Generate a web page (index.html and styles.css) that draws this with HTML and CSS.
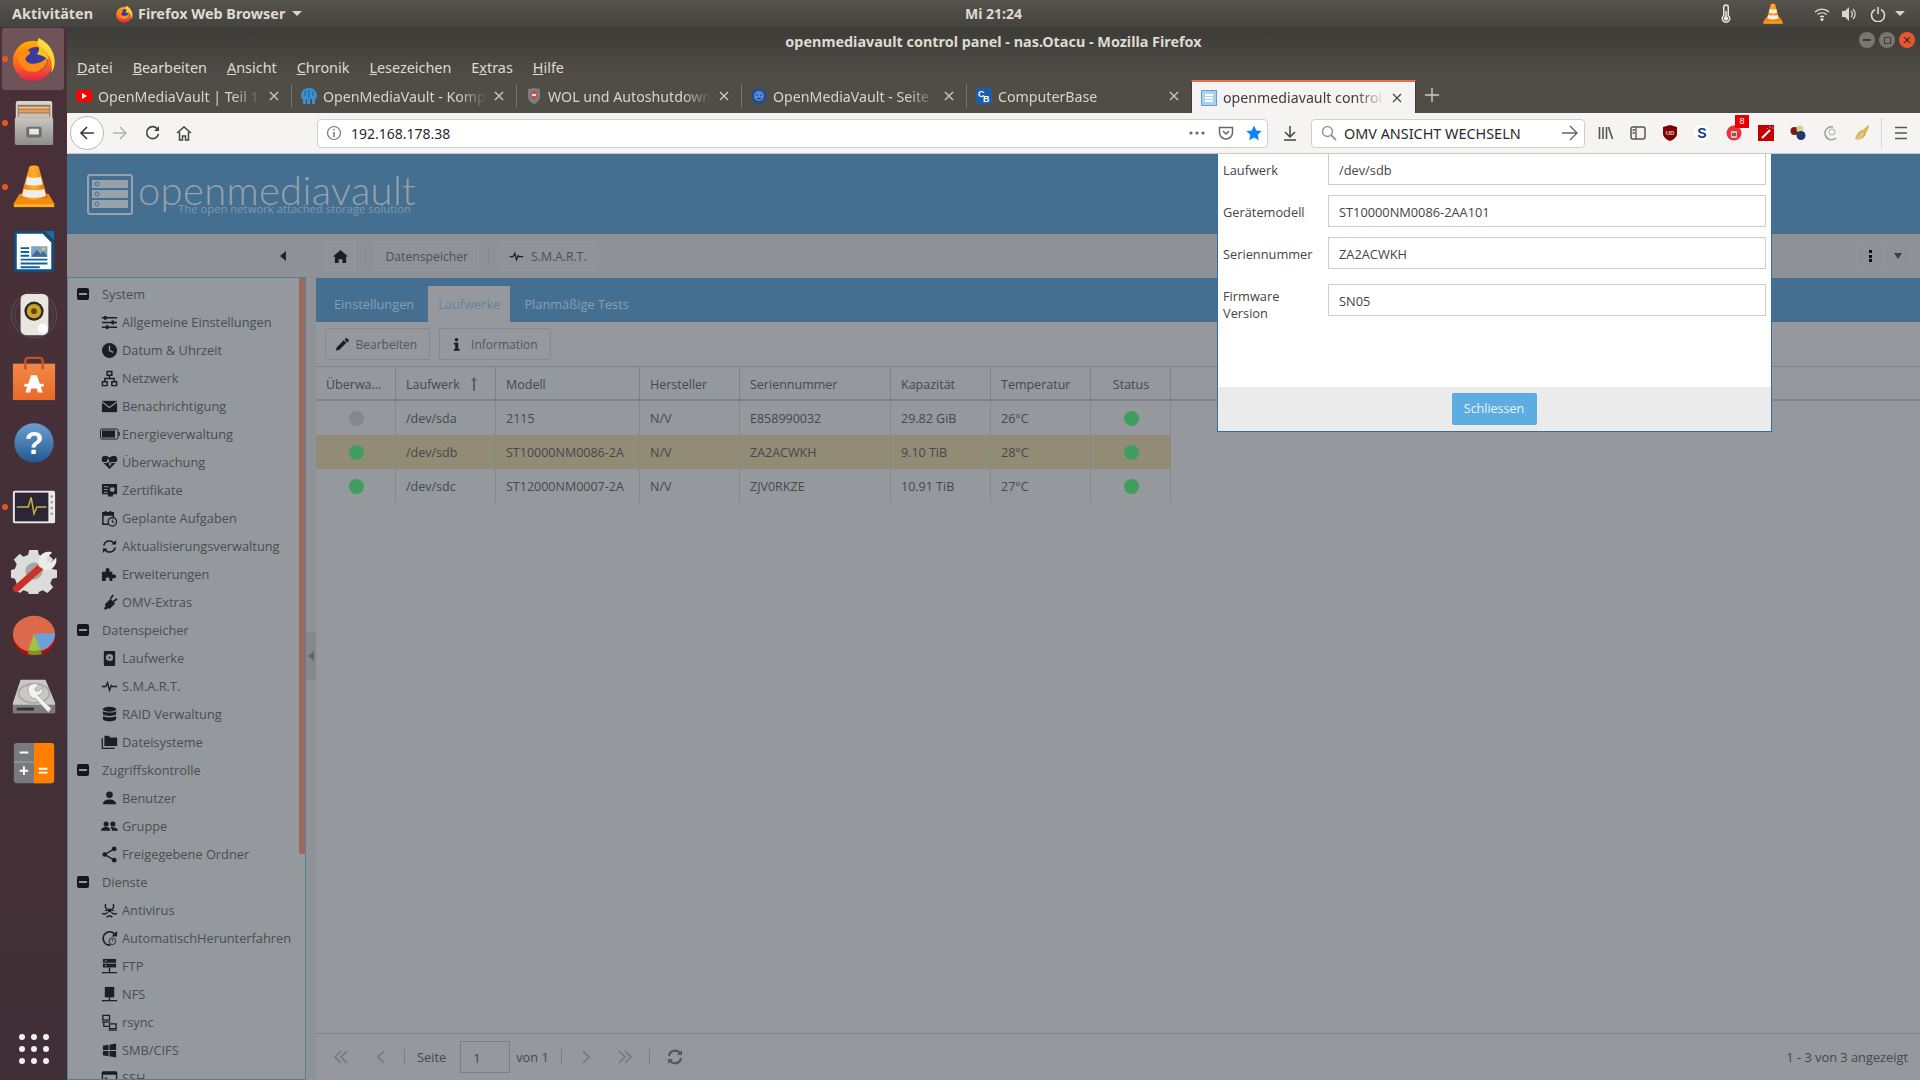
FILE: index.html
```html
<!DOCTYPE html>
<html lang="de">
<head>
<meta charset="utf-8">
<title>openmediavault control panel</title>
<link rel="stylesheet" href="styles.css">
</head>
<body>
<svg class="defs" xmlns="http://www.w3.org/2000/svg">
<defs>
<linearGradient id="g-fx" x1="0" y1="0" x2="0" y2="1"><stop offset="0" stop-color="#ffb000"/><stop offset=".55" stop-color="#ff6a1a"/><stop offset="1" stop-color="#e5224f"/></linearGradient>
<linearGradient id="g-cone" x1="0" y1="0" x2="1" y2="0"><stop offset="0" stop-color="#f27a0a"/><stop offset=".5" stop-color="#ffae2c"/><stop offset="1" stop-color="#e56a00"/></linearGradient>
<linearGradient id="g-help" x1="0" y1="0" x2="0" y2="1"><stop offset="0" stop-color="#6aa0d2"/><stop offset="1" stop-color="#22588f"/></linearGradient>
<linearGradient id="g-bag" x1="0" y1="0" x2="0" y2="1"><stop offset="0" stop-color="#f08a46"/><stop offset="1" stop-color="#e9692a"/></linearGradient>
<linearGradient id="g-cab" x1="0" y1="0" x2="0" y2="1"><stop offset="0" stop-color="#c9c7c2"/><stop offset="1" stop-color="#8f8d89"/></linearGradient>

<symbol id="i-firefox" viewBox="0 0 48 48">
<circle cx="24" cy="26" r="21" fill="url(#g-fx)"/>
<path d="M30 2C26 9 31 13 37 17c6 5 8 12 6 21 5-6 4-14 2-20C42 10 36 5 30 2z" fill="#ffd83a"/>
<circle cx="27" cy="24" r="12.500" fill="#3c3a9e"/>
<path d="M8 18c4-4 7-4 11-3 3 1 2 4 0 5-2 2-4 3-2 6 2 3 8 4 13 2 4-2 7-3 9-7 1 7-3 14-12 16C18 39 8 33 8 18z" fill="#ff8a14"/>
<path d="M30 10c5 3 10 8 10 15-4-4-8-5-12-6 2-2 3-5 2-9z" fill="#ffc21c"/>
</symbol>

<symbol id="i-cab" viewBox="0 0 48 48">
<rect x="5" y="1" width="38" height="20" rx="2" fill="#d6d4cf"/>
<rect x="7" y="5" width="34" height="14" fill="#8a7a60"/>
<rect x="8" y="7" width="32" height="2" fill="#f5c08a"/>
<rect x="8" y="10" width="32" height="3" fill="#ee9a58"/>
<rect x="8" y="14" width="32" height="4" fill="#c9c2b4"/>
<rect x="4" y="18" width="40" height="29" rx="2" fill="url(#g-cab)"/>
<rect x="16" y="28" width="16" height="11" rx="2" fill="#6f6e6a"/>
<rect x="19" y="30" width="10" height="6" fill="#e8e7e3"/>
</symbol>

<symbol id="i-vlc" viewBox="0 0 48 48">
<path d="M3 41l6-10h30l6 10v3H3z" fill="#f28a0d"/>
<path d="M19 3c1-2 9-2 10 0l9 32c-3 3-25 3-28 0z" fill="url(#g-cone)"/>
<path d="M17 13c4 2 10 2 14 0l2 8c-5 2-13 2-18 0zM13.500 26c6 2 15 2 21 0l2 7c-6 3-19 3-25 0z" fill="#eee"/>
<rect x="3" y="42" width="42" height="3" fill="#ffb01e"/>
</symbol>

<symbol id="i-writer" viewBox="0 0 48 48">
<path d="M3 3h31l11 11v30a2 2 0 0 1-2 2H5a2 2 0 0 1-2-2z" fill="#0e4f7e"/>
<path d="M6 6h27l9 9v28H6z" fill="#fff"/>
<path d="M35 3h10v10z" fill="#1a6ea8"/>
<path d="M10 20h9v2h-9zM10 24h9v2h-9zM10 28h9v2h-9zM10 32h28v2H10zM10 36h28v2H10zM10 40h20v2H10z" fill="#136295"/>
<rect x="21" y="19" width="17" height="11" fill="#7fa6c6"/>
<path d="M21 30l6-7 4 4 3-3 4 6z" fill="#3d6b8f"/>
<circle cx="34" cy="22" r="2" fill="#e8c24a"/>
</symbol>

<symbol id="i-spk" viewBox="0 0 48 48">
<circle cx="24" cy="24" r="23.500" fill="none" stroke="#6d6d78" stroke-opacity=".55"/>
<circle cx="24" cy="24" r="20" fill="none" stroke="#6d6d78" stroke-opacity=".4"/>
<rect x="10" y="2" width="29" height="43" rx="6" fill="#e8e6df"/>
<circle cx="24" cy="20" r="10" fill="#2c2a26"/>
<circle cx="24" cy="20" r="7.500" fill="#c9a227"/>
<circle cx="24" cy="20" r="3" fill="#5b4810"/>
<circle cx="33" cy="38" r="5" fill="#fff"/>
</symbol>

<symbol id="i-bag" viewBox="0 0 48 48">
<rect x="2" y="8" width="44" height="38" fill="url(#g-bag)"/>
<path d="M15 14V5a3 3 0 0 1 3-3h12a3 3 0 0 1 3 3v9" fill="none" stroke="#c9501e" stroke-width="2.500"/>
<path d="M21 20h6l6 18h-5l-1-4h-6l-1 4h-5z" fill="#fff"/>
<rect x="14" y="29" width="20" height="3" fill="#fff"/>
</symbol>

<symbol id="i-help" viewBox="0 0 48 48">
<circle cx="24" cy="24" r="20.500" fill="url(#g-help)"/>
<text x="24" y="35" text-anchor="middle" class="qmark">?</text>
</symbol>

<symbol id="i-mon" viewBox="0 0 48 48">
<rect x="2" y="7" width="44" height="34" rx="2" fill="#e9e9e7"/>
<rect x="4" y="9" width="35" height="30" fill="#2b2637"/>
<path d="M6 24h12l3-10 3 17 3-7h10" fill="none" stroke="#d1b33c" stroke-width="1.500"/>
<g fill="#9a9a98"><circle cx="42.500" cy="13" r="1.300"/><circle cx="42.500" cy="19" r="1.300"/><circle cx="42.500" cy="25" r="1.300"/><circle cx="42.500" cy="31" r="1.300"/></g>
</symbol>

<symbol id="i-tools" viewBox="0 0 48 48">
<path d="M19 2h9l1 5 5 2 4-3 6 6-3 5 2 5 5 1v8l-5 1-2 5 3 4-6 6-5-3-4 2-1 5h-9l-1-5-5-2-4 3-6-6 3-4-2-5-4-1v-8l4-1 2-5-3-5 6-6 4 3 5-2z" fill="#dcdcd8"/>
<circle cx="24" cy="24" r="9" fill="#a5a5a6"/>
<path d="M3 40L30 16l5 5L8 45a3 3 0 0 1-5-5z" fill="#cf2f2b"/>
<path d="M29 19c-2-7 2-14 9-15 2 0 4 0 5 1l-6 5 1 4 4 1 5-5c2 7-4 14-12 13z" fill="#ececE8"/>
</symbol>

<symbol id="i-pie" viewBox="0 0 48 48">
<ellipse cx="24" cy="27" rx="22" ry="19" fill="#a11414"/>
<ellipse cx="24" cy="23" rx="22" ry="19" fill="#dc6a4a"/>
<path d="M24 23l22-1c0 9-7 16-15 18z" fill="#6ba0d8"/>
<path d="M24 23l7 17c-5 1-9 1-13 0z" fill="#a5c040"/>
<path d="M18 40c4 1 8 1 13 0l1 4c-5 1-10 1-14 0z" fill="#6f9a2c"/>
</symbol>

<symbol id="i-disk" viewBox="0 0 48 48">
<path d="M10 4h26l10 24v10H2V28z" fill="#c9c8c4"/>
<ellipse cx="24" cy="18" rx="16" ry="10" fill="none" stroke="#a5a4a0" stroke-width="1.500"/>
<rect x="2" y="30" width="44" height="9" fill="#7d7c78"/>
<rect x="6" y="33" width="18" height="3" fill="#333"/>
<path d="M18 12c2-5 9-5 11-2l-4 3 1 3 4-1 3-3c1 3-1 8-5 8l14 14-3 4-14-15c-4 1-8-4-7-11z" fill="#f2f2ef" stroke="#8a8985" stroke-width=".6"/>
</symbol>

<symbol id="i-calc" viewBox="0 0 48 48">
<rect x="3" y="3" width="42" height="42" rx="3" fill="#777a7e"/>
<path d="M24 3h18a3 3 0 0 1 3 3v36a3 3 0 0 1-3 3H24z" fill="#ff7f00"/>
<path d="M3 23h21" stroke="#a8a9ab"/>
<path d="M9 13h9M9 32h9M13.500 27.500v9M29 30h9M29 34h9" stroke="#fff" stroke-width="2" fill="none"/>
</symbol>

<symbol id="i-thermo" viewBox="0 0 16 24"><path d="M5 3a3 3 0 0 1 6 0v11a5 5 0 1 1-6 0z" fill="none" stroke="#e8e6e1" stroke-width="2"/><circle cx="8" cy="18" r="3" fill="#e8e6e1"/><rect x="7" y="8" width="2" height="9" fill="#e8e6e1"/></symbol>

<symbol id="n-sliders" viewBox="0 0 18 18"><path d="M1 4h16M1 9h16M1 14h16" stroke="currentColor" stroke-width="1.400"/><rect x="3" y="2" width="3" height="4" rx="1" fill="currentColor"/><rect x="11" y="7" width="3" height="4" rx="1" fill="currentColor"/><rect x="5" y="12" width="3" height="4" rx="1" fill="currentColor"/></symbol>
<symbol id="n-clock" viewBox="0 0 18 18"><circle cx="9" cy="9" r="8" fill="currentColor"/><path d="M9 4v5l4 2" fill="none" stroke="#95989c" stroke-width="1.400"/></symbol>
<symbol id="n-net" viewBox="0 0 18 18"><path d="M6.500 1.500h5v4h-5zM1.500 12.500h5v4h-5zM11.500 12.500h5v4h-5zM9 5.500V9M4 12.500V9h10v3.500" fill="none" stroke="currentColor" stroke-width="1.500"/></symbol>
<symbol id="n-mail" viewBox="0 0 18 18"><path d="M1 3h16v12H1z" fill="currentColor"/><path d="M1 4l8 6 8-6" fill="none" stroke="#95989c" stroke-width="1.200"/></symbol>
<symbol id="n-batt" viewBox="0 0 20 12"><rect x=".5" y="1" width="17.500" height="10" rx="1.500" fill="none" stroke="currentColor"/><rect x="2" y="2.500" width="13" height="7" fill="currentColor"/><rect x="18.500" y="4" width="1.200" height="4" fill="currentColor"/></symbol>
<symbol id="n-heart" viewBox="0 0 18 18"><path d="M9 16L2 9C-1 5 2 1 5 2c2 0 3 1 4 2 1-1 2-2 4-2 3-1 6 3 3 7z" fill="currentColor"/><path d="M1 9h5l1.500-3 2 6L11 9h6" fill="none" stroke="#95989c" stroke-width="1.100"/></symbol>
<symbol id="n-cert" viewBox="0 0 18 18"><path d="M1 2h16v11h-4l-1 3-2-1-2 1-1-3H1z" fill="currentColor"/><path d="M3 5h5M3 8h4M3 11h4" stroke="#95989c"/><circle cx="12" cy="8" r="2.500" fill="#95989c"/></symbol>
<symbol id="n-cal" viewBox="0 0 18 18"><path d="M2 3h11v7H9l-1 5H2z" fill="none" stroke="currentColor" stroke-width="1.600"/><path d="M2 3h11v3H2zM4 1h2v3H4zM9 1h2v3H9z" fill="currentColor"/><circle cx="12" cy="12.500" r="4.500" fill="#95989c" stroke="currentColor" stroke-width="1.300"/><path d="M12 10v3h2" fill="none" stroke="currentColor"/></symbol>
<symbol id="n-sync" viewBox="0 0 18 18"><path d="M3 8a6 6 0 0 1 11-2M15 10a6 6 0 0 1-11 2" fill="none" stroke="currentColor" stroke-width="1.700"/><path d="M16 2v5h-5zM2 16v-5h5z" fill="currentColor"/></symbol>
<symbol id="n-puzzle" viewBox="0 0 18 18"><path d="M1 6h4V4a2 2 0 0 1 4 0v2h3v3h2a2 2 0 0 1 0 4h-2v3H9v-2a2 2 0 0 0-4 0v2H1z" fill="currentColor"/></symbol>
<symbol id="n-plug" viewBox="0 0 18 18"><path d="M3 15l2-2-1-2 6-6 5 5-6 6-2-1-2 2z" fill="currentColor"/><path d="M10 5l3-4M13 8l4-3" stroke="currentColor" stroke-width="1.800"/></symbol>
<symbol id="n-hdd" viewBox="0 0 18 18"><rect x="3" y="1" width="12" height="16" rx="1" fill="currentColor"/><circle cx="9" cy="8" r="3.800" fill="#95989c"/><circle cx="9" cy="8" r="1.100" fill="currentColor"/><path d="M6 14l2-3" stroke="currentColor"/></symbol>
<symbol id="n-pulse" viewBox="0 0 18 18"><path d="M1 9h4l2-4 2 8 2-5 1 1h5" fill="none" stroke="currentColor" stroke-width="1.500"/></symbol>
<symbol id="n-db" viewBox="0 0 18 18"><ellipse cx="9" cy="3.500" rx="7" ry="2.700" fill="currentColor"/><path d="M2 5.500c2 2 12 2 14 0V9c-2 2-12 2-14 0zM2 10.500c2 2 12 2 14 0V14c-2 3-12 3-14 0z" fill="currentColor"/></symbol>
<symbol id="n-folder" viewBox="0 0 20 18"><path d="M4 1h5l2 2h8v10H4z" fill="currentColor"/><path d="M1.500 4v12H16" fill="none" stroke="currentColor" stroke-width="1.500"/></symbol>
<symbol id="n-user" viewBox="0 0 18 18"><circle cx="9" cy="5" r="3.500" fill="currentColor"/><path d="M2 15c0-3 3-5 7-5s7 2 7 5z" fill="currentColor"/></symbol>
<symbol id="n-group" viewBox="0 0 20 18"><circle cx="6" cy="6" r="3" fill="currentColor"/><circle cx="14" cy="6" r="3" fill="currentColor"/><path d="M0 14c0-3 3-4.500 6-4.500S11 11 11 14zM11 9.500c4 0 9 1 9 4.500h-7c0-2-1-3-2-4.500z" fill="currentColor"/></symbol>
<symbol id="n-share" viewBox="0 0 18 18"><path d="M14 3L4 9l10 6" fill="none" stroke="currentColor" stroke-width="1.500"/><circle cx="14" cy="3" r="2.500" fill="currentColor"/><circle cx="4" cy="9" r="2.500" fill="currentColor"/><circle cx="14" cy="15" r="2.500" fill="currentColor"/></symbol>
<symbol id="n-bio" viewBox="0 0 18 18"><circle cx="9" cy="9" r="2" fill="currentColor"/><path d="M5 2a5 5 0 0 0 2 6M13 2a5 5 0 0 1-2 6M1 12a5 5 0 0 0 6-1M17 12a5 5 0 0 1-6-1M6 16a5 5 0 0 1 6 0" fill="none" stroke="currentColor" stroke-width="1.500"/><path d="M4 9h10" stroke="currentColor"/></symbol>
<symbol id="n-auto" viewBox="0 0 18 18"><path d="M15 5A7 7 0 1 0 10 16" fill="none" stroke="currentColor" stroke-width="1.800"/><path d="M17 1v6h-6z" fill="currentColor"/><circle cx="12" cy="12" r="3.500" fill="none" stroke="currentColor" stroke-width=".9"/><path d="M12 10v2" stroke="currentColor"/></symbol>
<symbol id="n-ftp" viewBox="0 0 18 18"><rect x="2" y="1" width="14" height="4" fill="currentColor"/><rect x="2" y="6" width="14" height="4" fill="currentColor"/><path d="M9 10v5M1 15.500h16" stroke="currentColor" stroke-width="1.500"/><path d="M4 3h2M4 8h2" stroke="#95989c"/></symbol>
<symbol id="n-nfs" viewBox="0 0 18 18"><rect x="4" y="1" width="10" height="11" fill="currentColor"/><path d="M9 12v3M1 15.500h16" stroke="currentColor" stroke-width="1.500"/></symbol>
<symbol id="n-rsync" viewBox="0 0 18 18"><path d="M2 1.500h7v5H2zM9 10.500h7v5H9z" fill="none" stroke="currentColor" stroke-width="1.400"/><path d="M1 8.500h9M8 17h9M3 9v4h5" fill="none" stroke="currentColor" stroke-width="1.300"/></symbol>
<symbol id="n-win" viewBox="0 0 18 18"><path d="M2 4l6-1v5.500H2zM9 2.800l7-1.300v7H9zM2 9.500h6V15l-6-1zM9 9.500h7v7l-7-1.300z" fill="currentColor"/></symbol>
<symbol id="n-term" viewBox="0 0 18 18"><rect x="1.500" y="2" width="15" height="14" rx="1" fill="none" stroke="currentColor" stroke-width="1.500"/><rect x="1.500" y="2" width="15" height="3" fill="currentColor"/><path d="M4 8l3 2-3 2" fill="none" stroke="currentColor" stroke-width="1.200"/></symbol>
</defs>
</svg>

<div class="desktop">
<header class="topbar">
  <span class="activities">Aktivitäten</span>
  <span class="appmenu"><svg class="ti-fox"><use href="#i-firefox"/></svg>Firefox Web Browser<i class="caret"></i></span>
  <span class="clock">Mi 21:24</span>
  <div class="tray">
    <svg class="tray-thermo"><use href="#i-thermo"/></svg>
    <svg class="tray-vlc"><use href="#i-vlc"/></svg>
    <svg class="tray-wifi" viewBox="0 0 16 16"><path d="M1 6a10 10 0 0 1 14 0M3.500 8.500a7 7 0 0 1 9 0M6 11a3.500 3.500 0 0 1 4 0" fill="none" stroke="#e0ded9" stroke-width="1.400"/><circle cx="8" cy="13.500" r="1.500" fill="#e0ded9"/></svg>
    <svg class="tray-vol" viewBox="0 0 16 16"><path d="M1 5h3l4-4v14l-4-4H1z" fill="#d8d6d1"/><path d="M10 5a4 4 0 0 1 0 6M12 3a7 7 0 0 1 0 10" fill="none" stroke="#d8d6d1" stroke-width="1.300"/></svg>
    <svg class="tray-pow" viewBox="0 0 16 16"><path d="M5 3.500a6.500 6.500 0 1 0 6 0M8 1v7" fill="none" stroke="#e0ded9" stroke-width="1.500"/></svg>
    <i class="caret"></i>
  </div>
</header>
<div class="below">
<aside class="dock">
  <div class="dock-item dock-active"><i class="run"></i><svg class="dk"><use href="#i-firefox"/></svg></div>
  <div class="dock-item"><i class="run"></i><svg class="dk"><use href="#i-cab"/></svg></div>
  <div class="dock-item"><i class="run"></i><svg class="dk"><use href="#i-vlc"/></svg></div>
  <div class="dock-item"><svg class="dk"><use href="#i-writer"/></svg></div>
  <div class="dock-item"><svg class="dk"><use href="#i-spk"/></svg></div>
  <div class="dock-item"><svg class="dk"><use href="#i-bag"/></svg></div>
  <div class="dock-item"><svg class="dk"><use href="#i-help"/></svg></div>
  <div class="dock-item"><i class="run"></i><svg class="dk"><use href="#i-mon"/></svg></div>
  <div class="dock-item"><svg class="dk"><use href="#i-tools"/></svg></div>
  <div class="dock-item"><svg class="dk"><use href="#i-pie"/></svg></div>
  <div class="dock-item"><svg class="dk"><use href="#i-disk"/></svg></div>
  <div class="dock-item"><svg class="dk"><use href="#i-calc"/></svg></div>
  <div class="dots"><i></i><i></i><i></i><i></i><i></i><i></i><i></i><i></i><i></i></div>
</aside>
<main class="window">
  <div class="titlebar">
    <span class="wintitle">openmediavault control panel - nas.Otacu - Mozilla Firefox</span>
    <div class="winbtns">
      <span class="wb"><i class="wb-min"></i></span><span class="wb"><i class="wb-max"></i></span><span class="wb wb-close">×</span>
    </div>
  </div>
  <nav class="menubar">
    <span><u>D</u>atei</span><span><u>B</u>earbeiten</span><span><u>A</u>nsicht</span><span><u>C</u>hronik</span><span><u>L</u>esezeichen</span><span>E<u>x</u>tras</span><span><u>H</u>ilfe</span>
  </nav>
  <div class="tabbar">
    <div class="tab"><svg class="fav" viewBox="0 0 16 16"><rect y="2" width="16" height="12" rx="3" fill="#f00"/><path d="M6 5l5 3-5 3z" fill="#fff"/></svg><span class="tab-t">OpenMediaVault | Teil 1 - Die Einrichtung</span><svg class="tab-x" viewBox="0 0 10 10"><path d="M1 1l8 8M9 1l-8 8"/></svg></div>
    <div class="tab"><svg class="fav" viewBox="0 0 16 16"><path d="M0 8c0-5 3-8 8-8s8 3 8 8c0 2-1 3-2 3v5h-3v-5H9v5H6v-5H5v5H2v-5C1 11 0 10 0 8z" fill="#3b8fd0"/><path d="M8 2v8M4 3v5M12 3v5" stroke="#1d5f96"/></svg><span class="tab-t">OpenMediaVault - Komplettanleitung</span><svg class="tab-x" viewBox="0 0 10 10"><path d="M1 1l8 8M9 1l-8 8"/></svg></div>
    <div class="tab"><svg class="fav" viewBox="0 0 16 16"><path d="M2 1l6-1 6 1v8c0 3-3 6-6 7-3-1-6-4-6-7z" fill="#75808a"/><path d="M5 3h6v5c0 2-1 3-3 4-2-1-3-2-3-4z" fill="#c9503a"/><rect x="6" y="6" width="4" height="2" fill="#dfe3e6"/></svg><span class="tab-t">WOL und Autoshutdown für OMV</span><svg class="tab-x" viewBox="0 0 10 10"><path d="M1 1l8 8M9 1l-8 8"/></svg></div>
    <div class="tab"><svg class="fav" viewBox="0 0 16 16"><circle cx="8" cy="8" r="7.800" fill="#1f4c9a"/><circle cx="8" cy="8" r="5" fill="#5e89c7"/><path d="M5 7h2M9 7h2M6 10c1 1 3 1 4 0" stroke="#143a7a"/></svg><span class="tab-t">OpenMediaVault - Seite 1 von 5</span><svg class="tab-x" viewBox="0 0 10 10"><path d="M1 1l8 8M9 1l-8 8"/></svg></div>
    <div class="tab"><svg class="fav" viewBox="0 0 16 16"><rect width="16" height="16" rx="2" fill="#1f5ca8"/><text x="2" y="9" class="cb">C</text><text x="7" y="14" class="cb">B</text></svg><span class="tab-t">ComputerBase</span><svg class="tab-x" viewBox="0 0 10 10"><path d="M1 1l8 8M9 1l-8 8"/></svg></div>
    <div class="tab tab-active"><svg class="fav" viewBox="0 0 16 16"><rect x=".5" y=".5" width="15" height="15" fill="#a9d3ef" stroke="#5aa2d6"/><path d="M4 4h8v2H4zM4 7h8v2H4zM4 10h8v2H4z" fill="#fff"/></svg><span class="tab-t">openmediavault control panel</span><svg class="tab-x" viewBox="0 0 10 10"><path d="M1 1l8 8M9 1l-8 8"/></svg></div>
    <svg class="newtab" viewBox="0 0 14 14"><path d="M7 0v14M0 7h14"/></svg>
  </div>
  <div class="navbar">
    <span class="backbtn"><svg class="nb" viewBox="0 0 16 16"><path d="M15 8H2M8 2L2 8l6 6" fill="none" stroke="#3a3a3a" stroke-width="1.600"/></svg></span>
    <svg class="nb fwd" viewBox="0 0 16 16"><path d="M1 8h13M8 2l6 6-6 6" fill="none" stroke="#b3b3b1" stroke-width="1.600"/></svg>
    <svg class="nb rel" viewBox="0 0 16 16"><path d="M13.500 9A6 6 0 1 1 12 3.500" fill="none" stroke="#444" stroke-width="1.600"/><path d="M14 1v5H9z" fill="#444"/></svg>
    <svg class="nb hom" viewBox="0 0 16 16"><path d="M1 8l7-6 7 6M3.500 7v8h3v-4h3v4h3V7" fill="none" stroke="#444" stroke-width="1.500"/></svg>
    <div class="urlbar">
      <svg class="ub-info" viewBox="0 0 16 16"><circle cx="8" cy="8" r="6.500" fill="none" stroke="#777" stroke-width="1.200"/><path d="M8 7v5M8 4v1.600" stroke="#777" stroke-width="1.500"/></svg>
      <span class="url">192.168.178.38</span>
      <svg class="ub-dots" viewBox="0 0 16 4"><circle cx="2" cy="2" r="1.600"/><circle cx="8" cy="2" r="1.600"/><circle cx="14" cy="2" r="1.600"/></svg>
      <svg class="ub-ic" viewBox="0 0 16 16"><path d="M1.500 2.500h13v5a6.500 6.500 0 0 1-13 0z" fill="none" stroke="#666" stroke-width="1.500"/><path d="M5 6l3 3 3-3" fill="none" stroke="#666" stroke-width="1.500"/></svg>
      <svg class="ub-ic ub-star" viewBox="0 0 16 16"><path d="M8 .5l2.300 5 5.400.6-4 3.700 1.100 5.400L8 12.500l-4.800 2.700 1.100-5.400-4-3.700 5.400-.6z" fill="#0a84ff"/></svg>
    </div>
    <svg class="nb dl" viewBox="0 0 16 16"><path d="M8 1v10M3 7l5 5 5-5M2 15h12" fill="none" stroke="#444" stroke-width="1.500"/></svg>
    <div class="searchbar">
      <svg class="sb-mag" viewBox="0 0 16 16"><circle cx="6.500" cy="6.500" r="5" fill="none" stroke="#999" stroke-width="1.500"/><path d="M10 10l5 5" stroke="#999" stroke-width="1.800"/></svg>
      <span class="sb-t">OMV ANSICHT WECHSELN</span>
      <svg class="sb-go" viewBox="0 0 16 16"><path d="M0 8h15M8 1l7 7-7 7" fill="none" stroke="#666" stroke-width="1.400"/></svg>
    </div>
    <div class="tools">
      <svg class="tb" viewBox="0 0 16 16"><path d="M1.500 2v12M5 2v12M8.500 2v12M10.500 2l4 12" fill="none" stroke="#555" stroke-width="1.600"/></svg>
      <svg class="tb" viewBox="0 0 16 16"><rect x="1" y="2" width="14" height="12" rx="2" fill="none" stroke="#555" stroke-width="1.500"/><path d="M6 2v12M2.500 5H5M2.500 8H5" stroke="#555" stroke-width="1.300"/></svg>
      <svg class="tb" viewBox="0 0 16 16"><path d="M8 0l7 2v7c0 3-4 6-7 7-3-1-7-4-7-7V2z" fill="#800000"/><text x="8" y="10" class="ub">UD</text></svg>
      <svg class="tb" viewBox="0 0 16 16"><circle cx="8" cy="8" r="8" fill="#fff"/><text x="8" y="13" class="s-mark">S</text></svg>
      <div class="tb-badge"><svg class="tb" viewBox="0 0 16 16"><circle cx="8" cy="8" r="7.500" fill="#e8323c"/><rect x="5" y="6" width="6" height="7" fill="#f5b3b3"/><path d="M6 8h4v3H6z" fill="#666"/></svg><b class="badge">8</b></div>
      <svg class="tb" viewBox="0 0 16 16"><rect width="16" height="16" fill="#c10000"/><path d="M4 13L12 5" stroke="#fff" stroke-width="2"/><path d="M12 1v2M14 3h2M9 3l1 1" stroke="#f6c" stroke-width="1"/></svg>
      <svg class="tb" viewBox="0 0 16 16"><circle cx="4.500" cy="6" r="4" fill="#7a1d17"/><circle cx="10" cy="4" r="3.500" fill="#d8cf8e"/><circle cx="11" cy="10.500" r="4.500" fill="#1d3c6d"/></svg>
      <svg class="tb" viewBox="0 0 16 16"><path d="M11 2A6.500 6.500 0 1 0 14 13" fill="none" stroke="#9a9a9a" stroke-width="1.400"/><circle cx="10" cy="7" r="3" fill="none" stroke="#aaa"/></svg>
      <svg class="tb" viewBox="0 0 16 16"><path d="M14 0L9 5c-3 0-6 3-8 9l3 1c3-1 8-3 8-7l3-6z" fill="#e4b04f"/><path d="M1 14c2-1 5-4 7-7l2 2c-2 2-5 5-6 6z" fill="#cfcbb3"/></svg>
      <i class="tb-sep"></i>
      <svg class="tb tb-ham" viewBox="0 0 16 16"><path d="M2 2.500h12M2 8h12M2 13.500h12" stroke="#555" stroke-width="1.700"/></svg>
    </div>
  </div>

  <section class="app">
    <div class="omv-head">
      <svg class="logo" viewBox="0 0 46 41"><rect x="1" y="1" width="44" height="39" rx="2" fill="none" stroke="#97a2ab" stroke-width="2"/><rect x="5" y="6" width="36" height="8" fill="#97a2ab"/><rect x="5" y="16" width="36" height="8" fill="#97a2ab"/><rect x="5" y="26" width="36" height="8" fill="#97a2ab"/><circle cx="10" cy="10" r="2" fill="none" stroke="#456f90"/><circle cx="10" cy="20" r="2" fill="none" stroke="#456f90"/><circle cx="10" cy="30" r="2" fill="none" stroke="#456f90"/></svg>
      <div class="brand">
        <span class="brand-name">openmediavault</span>
        <span class="brand-tag">The open network attached storage solution</span>
      </div>
    </div>
    <div class="crumbbar">
      <div class="collapse"><i class="tri-left"></i></div>
      <span class="crumb crumb-home"><svg class="ci" viewBox="0 0 16 16"><path d="M8 1l8 7h-2v7h-4v-4H6v4H2V8H0z" fill="#1b1e22"/></svg></span>
      <i class="csep"></i>
      <span class="crumb">Datenspeicher</span>
      <i class="csep"></i>
      <span class="crumb"><svg class="ci" viewBox="0 0 18 18"><path d="M1 9h4l2-4 2 8 2-5 1 1h5" fill="none" stroke="#1b1e22" stroke-width="1.500"/></svg>S.M.A.R.T.</span>
      <span class="splitbtn"><span class="sb-a"><i class="vdots"></i></span><span class="sb-b"><i class="tri-down"></i></span></span>
    </div>
    <div class="workspace">
      <div class="sidebar">
        <ul class="tree">
          <li class="grp"><i class="minus"></i>System</li>
          <li class="itm"><svg class="ni"><use href="#n-sliders"/></svg>Allgemeine Einstellungen</li>
          <li class="itm"><svg class="ni"><use href="#n-clock"/></svg>Datum &amp; Uhrzeit</li>
          <li class="itm"><svg class="ni"><use href="#n-net"/></svg>Netzwerk</li>
          <li class="itm"><svg class="ni"><use href="#n-mail"/></svg>Benachrichtigung</li>
          <li class="itm"><svg class="ni ni-wide"><use href="#n-batt"/></svg>Energieverwaltung</li>
          <li class="itm"><svg class="ni"><use href="#n-heart"/></svg>Überwachung</li>
          <li class="itm"><svg class="ni"><use href="#n-cert"/></svg>Zertifikate</li>
          <li class="itm"><svg class="ni"><use href="#n-cal"/></svg>Geplante Aufgaben</li>
          <li class="itm"><svg class="ni"><use href="#n-sync"/></svg>Aktualisierungsverwaltung</li>
          <li class="itm"><svg class="ni"><use href="#n-puzzle"/></svg>Erweiterungen</li>
          <li class="itm"><svg class="ni"><use href="#n-plug"/></svg>OMV-Extras</li>
          <li class="grp"><i class="minus"></i>Datenspeicher</li>
          <li class="itm"><svg class="ni"><use href="#n-hdd"/></svg>Laufwerke</li>
          <li class="itm"><svg class="ni"><use href="#n-pulse"/></svg>S.M.A.R.T.</li>
          <li class="itm"><svg class="ni"><use href="#n-db"/></svg>RAID Verwaltung</li>
          <li class="itm"><svg class="ni"><use href="#n-folder"/></svg>Dateisysteme</li>
          <li class="grp"><i class="minus"></i>Zugriffskontrolle</li>
          <li class="itm"><svg class="ni"><use href="#n-user"/></svg>Benutzer</li>
          <li class="itm"><svg class="ni"><use href="#n-group"/></svg>Gruppe</li>
          <li class="itm"><svg class="ni"><use href="#n-share"/></svg>Freigegebene Ordner</li>
          <li class="grp"><i class="minus"></i>Dienste</li>
          <li class="itm"><svg class="ni"><use href="#n-bio"/></svg>Antivirus</li>
          <li class="itm"><svg class="ni"><use href="#n-auto"/></svg>AutomatischHerunterfahren</li>
          <li class="itm"><svg class="ni"><use href="#n-ftp"/></svg>FTP</li>
          <li class="itm"><svg class="ni"><use href="#n-nfs"/></svg>NFS</li>
          <li class="itm"><svg class="ni"><use href="#n-rsync"/></svg>rsync</li>
          <li class="itm"><svg class="ni"><use href="#n-win"/></svg>SMB/CIFS</li>
          <li class="itm"><svg class="ni"><use href="#n-term"/></svg>SSH</li>
        </ul>
        <div class="scrolltrack"><div class="scrollthumb"></div></div>
      </div>
      <div class="splitter"><span class="split-handle"><i class="tri-left tri-dim"></i></span></div>
      <div class="panel">
        <div class="tabstrip">
          <span class="ptab">Einstellungen</span>
          <span class="ptab ptab-on">Laufwerke</span>
          <span class="ptab">Planmäßige Tests</span>
        </div>
        <div class="actions">
          <span class="act"><svg class="ai" viewBox="0 0 16 16"><path d="M1 15l1-4 8-8 3 3-8 8zM11 2l1-1c1-1 2 0 3 1s1 2 0 3l-1 1z" fill="#1b1e22"/></svg>Bearbeiten</span>
          <span class="act"><svg class="ai ai-i" viewBox="0 0 8 16"><circle cx="4" cy="2.500" r="2" fill="#1b1e22"/><path d="M1 6h5v7h1.500v2H1v-2h1.500V8H1z" fill="#1b1e22"/></svg>Information</span>
        </div>
        <div class="grid">
          <div class="g-head">
            <div class="g-row">
              <span class="cell">Überwa...</span>
              <span class="cell">Laufwerk<svg class="sort" viewBox="0 0 8 14"><path d="M4 0l3 4H5v10H3V4H1z" fill="#5d6064"/></svg></span>
              <span class="cell">Modell</span>
              <span class="cell">Hersteller</span>
              <span class="cell">Seriennummer</span>
              <span class="cell">Kapazität</span>
              <span class="cell">Temperatur</span>
              <span class="cell cell-c">Status</span>
            </div>
          </div>
          <div class="g-row g-data">
            <span class="cell cell-c"><i class="led led-off"></i></span><span class="cell">/dev/sda</span><span class="cell">2115</span><span class="cell">N/V</span><span class="cell">E858990032</span><span class="cell">29.82 GiB</span><span class="cell">26°C</span><span class="cell cell-c"><i class="led"></i></span>
          </div>
          <div class="g-row g-data g-sel">
            <span class="cell cell-c"><i class="led"></i></span><span class="cell">/dev/sdb</span><span class="cell">ST10000NM0086-2A</span><span class="cell">N/V</span><span class="cell">ZA2ACWKH</span><span class="cell">9.10 TiB</span><span class="cell">28°C</span><span class="cell cell-c"><i class="led"></i></span>
          </div>
          <div class="g-row g-data">
            <span class="cell cell-c"><i class="led"></i></span><span class="cell">/dev/sdc</span><span class="cell">ST12000NM0007-2A</span><span class="cell">N/V</span><span class="cell">ZJV0RKZE</span><span class="cell">10.91 TiB</span><span class="cell">27°C</span><span class="cell cell-c"><i class="led"></i></span>
          </div>
        </div>
        <footer class="pager">
          <svg class="pg pg-first" viewBox="0 0 14 14"><path d="M7 1L1 7l6 6M13 1L7 7l6 6"/></svg>
          <svg class="pg pg-prev" viewBox="0 0 8 14"><path d="M7 1L1 7l6 6"/></svg>
          <i class="pg-sep"></i>
          <span class="pg-l">Seite</span>
          <span class="pg-in">1</span>
          <span class="pg-v">von 1</span>
          <i class="pg-sep"></i>
          <svg class="pg pg-next" viewBox="0 0 8 14"><path d="M1 1l6 6-6 6"/></svg>
          <svg class="pg pg-last" viewBox="0 0 14 14"><path d="M1 1l6 6-6 6M7 1l6 6-6 6"/></svg>
          <i class="pg-sep"></i>
          <svg class="pg-ref" viewBox="0 0 16 16"><path d="M2 7a6 6 0 0 1 11-2.500M14 9A6 6 0 0 1 3 11.500" fill="none" stroke="#55585c" stroke-width="2.200"/><path d="M15 1v5h-5zM1 15v-5h5z" fill="#55585c"/></svg>
          <span class="pg-info">1 - 3 von 3 angezeigt</span>
        </footer>
      </div>
    </div>

    <div class="modal">
      <div class="m-body">
        <div class="m-row m-first"><label class="m-l">Laufwerk</label><span class="m-in">/dev/sdb</span></div>
        <div class="m-row"><label class="m-l">Gerätemodell</label><span class="m-in">ST10000NM0086-2AA101</span></div>
        <div class="m-row"><label class="m-l">Seriennummer</label><span class="m-in">ZA2ACWKH</span></div>
        <div class="m-row m-two"><label class="m-l">Firmware Version</label><span class="m-in">SN05</span></div>
      </div>
      <div class="m-foot"><span class="m-btn">Schliessen</span></div>
    </div>
  </section>
</main>
</div>
</div>
</body>
</html>
```
FILE: styles.css
```css
*{box-sizing:border-box}
html,body{margin:0;padding:0;height:100%;overflow:hidden}
body{font-family:"Open Sans","Noto Sans",sans-serif;font-size:12.8px;color:#45484d}
i{display:block;font-style:normal}
.defs{display:block;width:0;height:0}
.qmark{font:700 32px "Liberation Sans",sans-serif;fill:#fff}
.cb{font:700 9px "Liberation Sans",sans-serif;fill:#fff}
.ub{font:700 6px "Liberation Sans",sans-serif;fill:#e8c8c8;text-anchor:middle}
.s-mark{font:700 14px "Liberation Sans",sans-serif;fill:#0b3d91;text-anchor:middle}

.desktop{width:1920px;height:1080px;display:flex;flex-direction:column;overflow:hidden}
.topbar{height:27px;flex:none;display:flex;align-items:center;position:relative;background:linear-gradient(#56534d,#45433e);color:#dfdbd2;font:700 14.4px "Noto Sans",sans-serif;padding-left:12px}
.activities{margin-right:22px;width:81px;white-space:nowrap}
.appmenu{display:flex;align-items:center;white-space:nowrap}
.ti-fox{width:18px;height:18px;margin-right:5px}
.caret{width:0;height:0;border:5px solid transparent;border-top:5px solid #d6d3cc;border-bottom:0;margin-left:7px}
.clock{position:absolute;left:965px;top:4px;font-size:14px}
.tray{margin-left:auto;display:flex;align-items:center;padding-right:15px}
.tray-thermo{width:12px;height:20px;margin-right:30px}
.tray-vlc{width:22px;height:22px;margin-right:30px}
.tray-wifi{width:16px;height:16px;margin-right:11px}
.tray-vol{width:16px;height:16px;margin-right:13px}
.tray-pow{width:16px;height:16px;margin-right:2px}

.below{flex:1;display:flex;min-height:0}
.dock{width:67px;flex:none;background:linear-gradient(#4a3038,#402f36);display:flex;flex-direction:column}
.dock-item{height:64px;flex:none;display:flex;align-items:center;justify-content:center;position:relative}
.dock-active{background:#6e5458;margin:1px 3px 1px 2px;height:62px;border-radius:3px}
.dk{width:46px;height:46px}
.run{position:absolute;left:2px;top:29px;width:6px;height:6px;border-radius:50%;background:#e9541f}
.dock-active .run{left:0;top:28px}
.dots{margin-top:auto;margin-bottom:16px;display:grid;grid-template-columns:repeat(3,6px);gap:6px;justify-content:center}
.dots i{width:6px;height:6px;border-radius:50%;background:#f2f0ee}

.window{flex:1;min-width:0;display:flex;flex-direction:column;background:linear-gradient(#3c3b37,#504d47 50px)}
.titlebar{height:28px;flex:none;display:flex;align-items:center;justify-content:center;position:relative;color:#dfdbd2;font:700 14.4px "Noto Sans",sans-serif}
.winbtns{position:absolute;right:5px;top:5px;display:flex;gap:4px}
.wb{width:16px;height:16px;border-radius:50%;background:#78766f;display:flex;align-items:center;justify-content:center;color:#3a2a22;font:400 15px/16px "Liberation Sans",sans-serif}
.wb-close{background:#e9562c}
.wb-min{width:8px;height:2px;background:#3c3b37}
.wb-max{width:7px;height:7px;border:1px solid #3c3b37}
.menubar{height:25px;flex:none;display:flex;align-items:center;gap:20px;padding-left:10px;color:#dfdbd2;font:14.4px "Noto Sans",sans-serif}
.tabbar{height:33px;flex:none;display:flex;align-items:stretch;background:#504d47;font:14.2px "Noto Sans",sans-serif;color:#d8d5cf;padding-bottom:1px}
.tab{width:225px;flex:none;display:flex;align-items:center;padding:0 13px 0 9px;position:relative}
.tab::after{content:"";position:absolute;right:0;top:4px;bottom:4px;width:1px;background:#76736d}
.tab:nth-child(5)::after,.tab-active::after{display:none}
.fav{width:16px;height:16px;flex:none;margin-right:6px}
.tab-t{flex:1;min-width:0;overflow:hidden;white-space:nowrap;-webkit-mask-image:linear-gradient(to right,#000 82%,transparent);mask-image:linear-gradient(to right,#000 82%,transparent)}
.tab-x{width:10px;height:10px;flex:none;margin-left:7px;fill:none;stroke:#cfccc6;stroke-width:1.300}
.tab-active{background:#f5f4f2;color:#3d3d3d;margin-left:-1px;margin-bottom:-1px;border-top:2px solid #e96f4a;border-right:1px solid #3c3b37;border-left:1px solid #3c3b37}
.tab-active .tab-x{stroke:#4a4a4a}
.newtab{width:14px;height:14px;margin:8px 0 0 9px;fill:none;stroke:#d0cdc7;stroke-width:1.400}
.navbar{height:41px;flex:none;background:#f5f4f2;border-bottom:1px solid #c9c9c7;display:flex;align-items:center;position:relative;padding-left:3px;color:#333}
.backbtn{width:34px;height:34px;border-radius:50%;background:#fff;border:1px solid #b9b9b7;display:flex;align-items:center;justify-content:center;flex:none;margin-right:8px}
.nb{width:16px;height:16px;flex:none}
.fwd{margin-right:17px}
.rel{margin-right:15px}
.hom{margin-right:0}
.urlbar{width:951px;height:29px;flex:none;margin-left:125px;background:#fff;border:1px solid #cfcfcd;border-radius:4px;display:flex;align-items:center;padding:0 5px 0 8px}
.ub-info{width:16px;height:16px;margin-right:9px}
.url{font:14px "Noto Sans",sans-serif;color:#2a2a2a}
.ub-dots{width:16px;height:4px;fill:#666;margin-left:auto;margin-right:13px}
.ub-ic{width:16px;height:16px;margin-right:12px}
.ub-star{margin-right:0;margin-left:0}
.dl{margin-left:14px;margin-right:13px}
.searchbar{width:274px;height:29px;flex:none;background:#fff;border:1px solid #cfcfcd;border-radius:4px;display:flex;align-items:center;padding:0 6px 0 9px}
.sb-mag{width:16px;height:16px;margin-right:7px}
.sb-t{font:14.4px "Noto Sans",sans-serif;color:#2a2a2a;white-space:nowrap;flex:1}
.sb-go{width:16px;height:16px}
.tools{display:flex;align-items:center;margin-left:13px;gap:16px}
.tb{width:16px;height:16px;flex:none;display:block}
.tb-badge{position:relative}
.badge{position:absolute;left:9px;top:-10px;width:14px;height:13px;background:#e60000;color:#fff;font:400 9px/13px "Liberation Sans",sans-serif;text-align:center}
.tb-sep{width:1px;height:30px;background:#d6d6d4;margin:0 -5px}
.tb-ham{margin-left:0}

.app{flex:1;min-height:0;position:relative;display:flex;flex-direction:column;background:#95989c}
.omv-head{height:80px;flex:none;background:#456f90;display:flex;align-items:center;padding-left:20px}
.logo{width:46px;height:41px;flex:none;margin-right:5px}
.brand{position:relative;line-height:1;margin-top:-8px}
.brand-name{display:block;font:300 40px/44px Lato,sans-serif;color:#97a2ab;letter-spacing:.3px}
.brand-tag{position:absolute;left:40px;top:35px;white-space:nowrap;font:11.3px/12px "Open Sans",sans-serif;color:#7b9ab2}
.crumbbar{height:44px;flex:none;background:#8e9195;display:flex;align-items:center;font-size:12.2px}
.collapse{width:257.5px;flex:none;display:flex;justify-content:flex-end;padding-right:39px}
.tri-left{width:0;height:0;border:5px solid transparent;border-left:0;border-right:6px solid #202327}
.tri-dim{border-right-color:#63666b}
.crumb{height:30px;display:flex;align-items:center;padding:0 10px;border:1px solid #93969a;border-radius:2px;background:#909398;color:#4d5055;white-space:nowrap}
.crumb-home{width:31px;padding:0;justify-content:center}
.ci{width:15px;height:15px;margin-right:0;flex:none}
.crumb .ci{margin-right:7px}
.crumb-home .ci{margin-right:0}
.csep{width:1px;height:16px;background:#85888c;margin:0 9px}
.splitbtn{margin-left:auto;margin-right:9px;width:55px;height:30px;display:flex;border:1px solid #93969a;border-radius:2px}
.sb-a{width:28px;display:flex;align-items:center;justify-content:center;border-right:1px solid #93969a}
.sb-b{flex:1;display:flex;align-items:center;justify-content:center}
.vdots{width:3px;height:12px;background:repeating-linear-gradient(#111 0 3px,transparent 3px 4.500px)}
.tri-down{width:0;height:0;border:4.500px solid transparent;border-top:6px solid #3a3d41;border-bottom:0}

.workspace{flex:1;min-height:0;display:flex}
.sidebar{width:239px;flex:none;display:flex;margin-top:-1px;background:#95989c;border:1px solid #587d99;border-right-width:1px}
.tree{list-style:none;margin:0;padding:2px 0 0;flex:1;min-width:0;overflow:hidden}
.grp,.itm{height:28px;display:flex;align-items:center;white-space:nowrap;color:#4a4d53}
.grp{padding-left:9px}
.itm{padding-left:33px}
.minus{width:12px;height:12px;border-radius:2px;background:#15181c;margin-right:13px;position:relative;flex:none}
.minus::after{content:"";position:absolute;left:2px;right:2px;top:5px;height:2px;background:#95989c}
.ni{width:17px;height:17px;flex:none;margin-right:4px;color:#1b1e22}
.ni-wide{width:20px;height:12px;margin-left:-1px;margin-right:2px}
.scrolltrack{width:6px;flex:none;overflow:hidden}
.scrollthumb{width:6px;height:576px;background:#9a6a5d}
.splitter{width:10px;flex:none;background:#8f9297;display:flex;flex-direction:column;padding-top:354px}
.split-handle{height:48px;background:#85888d;display:flex;align-items:center;justify-content:center}
.panel{flex:1;min-width:0;display:flex;flex-direction:column}
.tabstrip{height:44px;flex:none;background:#456f90;display:flex;align-items:flex-end;padding-left:8px}
.ptab{height:36px;display:flex;align-items:center;padding:0 10px;color:#84a0b6;white-space:nowrap}
.ptab-on{background:#95989c;color:#5f84a2;margin:0 4px}
.actions{height:44px;flex:none;display:flex;align-items:center;gap:9px;padding-left:8.5px;font-size:12px}
.act{height:32px;display:flex;align-items:center;padding:0 12px 0 9px;border:1px solid #85888c;border-radius:2px;color:#54575c}
.ai{width:14px;height:15px;margin-right:7px;flex:none}
.ai-i{width:7px;margin:0 11px 0 4px}
.grid{flex:1;min-height:0;font-size:12.5px}
.g-head{height:35px;border-top:1px solid #7e8185;border-bottom:2px solid #7e8185}
.g-row{display:grid;grid-template-columns:80px 100px 144px 100px 151px 100px 100px 80px;width:855px}
.g-head .g-row{height:32px}
.g-data{height:34px}
.g-sel{background:#928b75}
.cell{display:flex;align-items:center;padding-left:10px;border-right:1px solid #85888c;white-space:nowrap;overflow:hidden;color:#45484d}
.cell-c{justify-content:center;padding-left:1px}
.g-head .cell{border-right-color:#7e8185;color:#45484d;padding-top:2px}
.sort{width:8px;height:14px;margin-left:10px}
.led{width:15px;height:15px;border-radius:50%;background:#3f9e5e}
.led-off{background:#84878b}
.pager{height:47px;flex:none;border-top:1px solid #7e8185;display:flex;align-items:center;position:relative;padding-left:18px;color:#45484d}
.pg{fill:none;stroke:#75787c;stroke-width:1.600;height:14px;flex:none}
.pg-first{width:14px;margin-right:29px}
.pg-prev{width:8px;margin-right:19px}
.pg-sep{width:1px;height:16px;background:#7a7d81;flex:none}
.pg-l{margin:0 14px 0 12px}
.pg-in{width:50px;height:32px;border:1px solid #7a7d81;padding-left:12px;line-height:32px;margin-right:6px}
.pg-v{margin-right:12px}
.pg-next{width:8px;margin:0 28px 0 20px}
.pg-last{width:14px;margin-right:17px}
.pg-ref{width:16px;height:16px;margin-left:17px}
.pg-info{margin-left:auto;padding-right:12px}

.modal{position:absolute;left:1150px;top:0;width:555px;height:278px;background:#fff;border:1px solid #2f6fa6;border-top:0;display:flex;flex-direction:column;color:#444}
.m-body{height:233px;flex:none;padding-right:5px;overflow:hidden}
.m-row{display:flex;margin-bottom:10px;height:32px}
.m-first{margin-top:-1px}
.m-two{margin-top:15px}
.m-l{width:110px;flex:none;padding:9px 12px 0 5px;line-height:17px}
.m-two .m-l{padding-top:4px}
.m-in{flex:1;border:1px solid #ccc;height:32px;line-height:32px;padding-left:10px;color:#444}
.m-foot{flex:1;background:#ebebeb;display:flex;justify-content:center;padding:6px 1px 0 0}
.m-btn{width:85px;height:32px;background:#5dade2;border-radius:2px;color:#e9f4fb;text-align:center;line-height:32px;font-size:12.5px}
```
